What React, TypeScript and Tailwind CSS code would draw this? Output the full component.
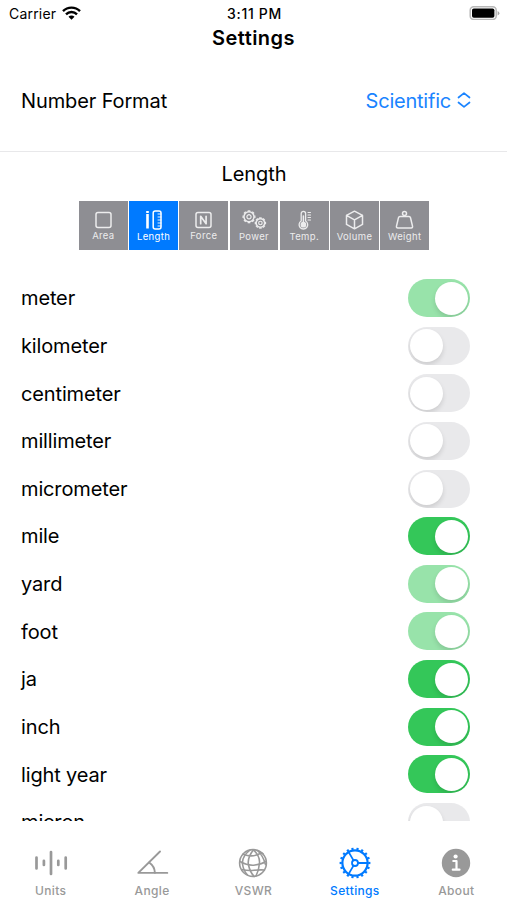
import React, { useState } from 'react';

type Unit = { name: string; on: boolean; locked?: boolean };

const initialUnits: Unit[] = [
  { name: 'meter', on: true, locked: true },
  { name: 'kilometer', on: false },
  { name: 'centimeter', on: false },
  { name: 'millimeter', on: false },
  { name: 'micrometer', on: false },
  { name: 'mile', on: true },
  { name: 'yard', on: true, locked: true },
  { name: 'foot', on: true, locked: true },
  { name: 'ja', on: true },
  { name: 'inch', on: true },
  { name: 'light year', on: true },
  { name: 'micron', on: false },
];

const gearTeeth = Array.from({ length: 18 }, (_, i) => i * 20);
const cogTeeth = Array.from({ length: 8 }, (_, i) => i * 45);

function Cog({ x, y, r }: { x: number; y: number; r: number }) {
  return (
    <g transform={`translate(${x} ${y})`}>
      <circle r={r} strokeWidth="1.4" />
      <circle r={r * 0.42} strokeWidth="1.2" />
      {cogTeeth.map((a) => (
        <path key={a} d={`M0 ${-r - 0.2}V${-r - 1.5}`} strokeWidth="2.6" strokeLinecap="butt" transform={`rotate(${a})`} />
      ))}
    </g>
  );
}

const categories = [
  { name: 'Area', raised: true, icon: <rect x="5" y="3.5" width="15" height="15" rx="2" /> },
  {
    name: 'Length',
    icon: (
      <>
        <path d="M6.5 2v2M6.5 5v14.5" strokeWidth="2.6" strokeLinecap="butt" />
        <rect x="12.2" y="2" width="7.8" height="18" rx="2" />
        <path d="M20 5h-3M20 8h-3M20 11h-3M20 14h-3M20 17h-3" strokeWidth="0.9" />
      </>
    ),
  },
  {
    name: 'Force',
    raised: true,
    icon: (
      <>
        <rect x="5" y="3.5" width="15" height="15" rx="2" />
        <path d="M9.7 14.7V7.3l5.4 7.4V7.3" strokeWidth="1.7" />
      </>
    ),
  },
  {
    name: 'Power',
    icon: (
      <>
        <Cog x={7} y={7.8} r={5} />
        <Cog x={18.4} y={14} r={4.2} />
      </>
    ),
  },
  {
    name: 'Temp.',
    icon: (
      <>
        <path d="M9.2 12V4.5a2.2 2.2 0 0 1 4.4 0V12a4.3 4.3 0 1 1-4.4 0z" strokeWidth="1.3" />
        <path d="M11.4 7v8" />
        <circle cx="11.4" cy="15.7" r="2.1" fill="currentColor" />
        <path d="M16 3.5h2.5M16 6h2.5M16 8.5h2.5M16 11h2.5" strokeWidth="1.1" />
      </>
    ),
  },
  { name: 'Volume', icon: <path d="M12.5 2.2l8 4.2v9l-8 4.4-8-4.4v-9zM4.5 6.4l8 4.4 8-4.4M12.5 10.8v9" /> },
  {
    name: 'Weight',
    icon: (
      <>
        <circle cx="12.5" cy="4.4" r="2" />
        <path d="M8 7.5h9q1.2 0 1.5 1.2l2 8.5q.4 1.8-1.4 1.8H5.9q-1.8 0-1.4-1.8l2-8.5Q6.8 7.5 8 7.5z" />
      </>
    ),
  },
];

const tabs = [
  {
    name: 'Units',
    icon: <path d="M3.5 12.5v11M18 7v22M32.7 12.5v11M10.9 15.8v4.2M25.3 15.8v4.2" strokeWidth="2.7" />,
  },
  {
    name: 'Angle',
    icon: (
      <>
        <path d="M26 6.5L4.3 27.9h29" strokeWidth="1.9" />
        <path d="M15.2 17.5q5.5 3.8 5.7 10.3" strokeWidth="1.9" />
      </>
    ),
  },
  {
    name: 'VSWR',
    icon: (
      <g strokeWidth="1.6">
        <circle cx="18" cy="18" r="13.4" />
        <path d="M18.5 4.8Q12 13 13.5 20T19 31.3M18.5 4.8Q25 11 24.5 18T21 31M15 5Q6.5 12 7.5 19T12.5 30" />
        <path d="M8 9.2q9 3.5 16-.2 3-1.5 4-.3M5 16.5q8 4.5 15 3.5t11-3.5M7 24.5q6 1.5 12 .8t10.5-.3M22.5 5.5q5.5 5 8 14" />
      </g>
    ),
  },
  {
    name: 'Settings',
    icon: (
      <g>
        <circle cx="18" cy="18" r="12.6" strokeWidth="2.2" />
        <circle cx="18" cy="18" r="3" strokeWidth="1.8" />
        <path d="M21 18h9.5M16.5 15.4L11.7 7.1M16.5 20.6l-4.8 8.3" strokeWidth="1.8" />
        {gearTeeth.map((a) => (
          <path key={a} d="M18 4.8V2.6" strokeWidth="2.2" strokeLinecap="butt" transform={`rotate(${a + 10} 18 18)`} />
        ))}
      </g>
    ),
  },
  {
    name: 'About',
    icon: (
      <>
        <circle cx="18" cy="18" r="14.2" fill="currentColor" stroke="none" />
        <circle cx="17.6" cy="11.5" r="2.1" fill="white" stroke="none" />
        <path d="M15.3 16h3.2v8.5M14.8 24.7h6.7" stroke="white" strokeWidth="2.2" />
      </>
    ),
  },
];

function StatusBar() {
  return (
    <div className="grid h-[27px] grid-cols-3 items-center pl-[9px] pr-[7px] text-[14px]">
      <div className="flex items-center gap-[6px]">
        <span className="tracking-[0.2px]">Carrier</span>
        <svg className="-mt-px h-[14px] w-[19px]" viewBox="0 0 19 14" fill="none" stroke="currentColor" strokeWidth="2.4">
          <path d="M1 5.2a12 12 0 0 1 17 0M4 8.3a7.8 7.8 0 0 1 11 0" />
          <path d="M9.5 13.8L6.5 10.7a4.2 4.2 0 0 1 6 0z" fill="currentColor" stroke="none" />
        </svg>
      </div>
      <div className="text-center font-medium tracking-[0.7px] whitespace-nowrap">3:11 PM</div>
      <svg className="-mt-px h-[14px] w-[31px] justify-self-end" viewBox="0 0 31 14">
        <rect x="1.2" y="0.8" width="26" height="12.6" rx="3.5" fill="white" stroke="#b8b8b8" strokeWidth="1.5" />
        <rect x="3" y="2.5" width="22.4" height="9.2" rx="1.8" fill="black" />
        <path d="M28.6 5v4.4q1.8-.7 1.8-2.2T28.6 5z" fill="#a8a8a8" />
      </svg>
    </div>
  );
}

function Toggle({ unit, onToggle }: { unit: Unit; onToggle: () => void }) {
  const track = unit.on ? (unit.locked ? 'bg-[#98e3aa]' : 'bg-[#34c759]') : 'bg-[#e9e9eb]';
  return (
    <button
      role="switch"
      aria-checked={unit.on}
      aria-label={unit.name}
      disabled={unit.locked}
      onClick={onToggle}
      className={`flex h-[38px] w-[62px] items-center overflow-hidden rounded-full px-[2px] ${track} ${unit.on ? 'justify-end' : 'justify-start'}`}
    >
      <span className="h-[33px] w-[33px] rounded-full bg-white shadow-[0_3px_5px_rgba(0,0,0,0.12)]" />
    </button>
  );
}

export default function App() {
  const [units, setUnits] = useState(initialUnits);
  const [category, setCategory] = useState('Length');
  const [tab, setTab] = useState('Settings');

  const toggle = (name: string) =>
    setUnits(units.map((u) => (u.name === name ? { ...u, on: !u.on } : u)));

  return (
    <div className="flex h-[900px] w-[507px] flex-col overflow-hidden bg-white font-[Inter,sans-serif] text-black">
      <StatusBar />
      <h1 className="h-[23px] text-center text-[20px] leading-[22px] font-semibold tracking-[0.45px]">Settings</h1>

      {/* Number format */}
      <div className="flex h-[102px] items-center justify-between border-b border-[#e8e8ea] pl-[21px] pr-[36px] text-[20px] tracking-[-0.12px]">
        <span>Number Format</span>
        <button className="flex items-center gap-[6px] text-[#1a84ff] tracking-[-0.22px]">
          Scientific
          <svg className="-mt-px h-4 w-[14px]" viewBox="0 0 14 16" fill="none" stroke="currentColor" strokeWidth="1.7" strokeLinecap="round" strokeLinejoin="round">
            <path d="M1.5 5.5L7 1.2l5.500 4.300M1.500 10.500L7 14.800l5.500-4.300" />
          </svg>
        </button>
      </div>

      {/* Category picker */}
      <div className="flex h-[122.2px] flex-col items-center pt-[8px] pl-px">
        <h2 className="h-[41px] text-[20px] leading-[28px] tracking-[-0.1px]">{category}</h2>
        <div className="flex h-[49px] w-[350px] gap-[1.5px]">
          {categories.map((c) => (
            <button
              key={c.name}
              onClick={() => setCategory(c.name)}
              className={`flex flex-1 flex-col items-center pt-[8px] ${
                category === c.name ? 'bg-[#007aff] text-white' : 'bg-[#8e8e93] text-[#ececed]'
              }`}
            >
              <svg className="h-[22px] w-[25px] overflow-visible" viewBox="0 0 25 22" fill="none" stroke="currentColor" strokeWidth="1.5" strokeLinecap="round" strokeLinejoin="round">
                {c.icon}
              </svg>
              <span className={`text-[9.5px] leading-[11px] tracking-[0.35px] ${c.raised ? '-mt-px' : ''}`}>{c.name}</span>
            </button>
          ))}
        </div>
      </div>

      {/* Units */}
      <div className="h-[546.8px] overflow-hidden pl-[21px] pr-[37px]">
        {units.map((u) => (
          <div key={u.name} className="flex h-[47.65px] items-center justify-between text-[20px] tracking-[-0.14px]">
            <span className="pt-[0.5px]">{u.name}</span>
            <Toggle unit={u} onToggle={() => toggle(u.name)} />
          </div>
        ))}
      </div>

      {/* Tab bar */}
      <nav className="grid flex-1 grid-cols-5 pt-[24px]">
        {tabs.map((t) => (
          <button
            key={t.name}
            onClick={() => setTab(t.name)}
            className={`flex flex-col items-center ${tab === t.name ? 'text-[#007aff]' : 'text-[#999999]'}`}
          >
            <svg className="h-9 w-9" viewBox="0 0 36 36" fill="none" stroke="currentColor" strokeLinecap="round" strokeLinejoin="round">
              {t.icon}
            </svg>
            <span className="mt-[2px] text-[12px] leading-[16px] font-medium tracking-[0.35px]">{t.name}</span>
          </button>
        ))}
      </nav>
    </div>
  );
}
